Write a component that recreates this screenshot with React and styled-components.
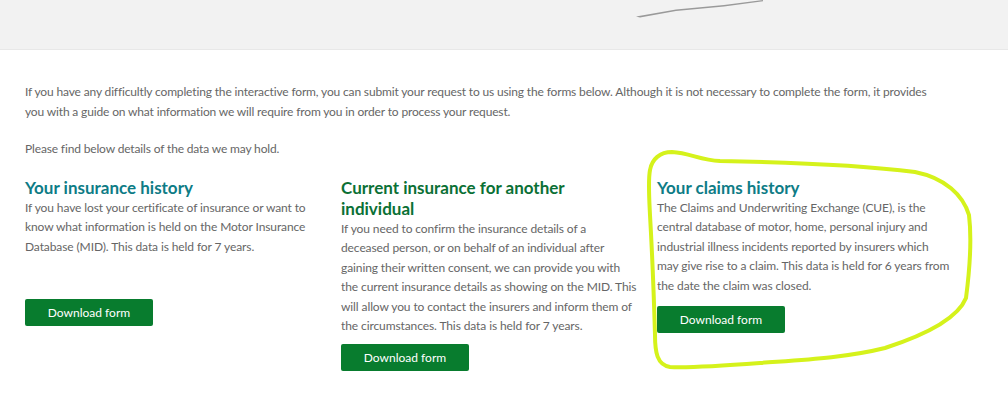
import styled, { createGlobalStyle } from 'styled-components';

const GlobalStyle = createGlobalStyle`
  body {
    margin: 0;
    background: #fff;
    font-family: Lato, "Open Sans", sans-serif;
  }
`;

const sections = [
  {
    title: 'Your insurance history',
    color: '#0e7c86',
    lines: [
      'If you have lost your certificate of insurance or want to',
      'know what information is held on the Motor Insurance',
      'Database (MID). This data is held for 7 years.',
    ],
    gap: 43,
  },
  {
    title: 'Current insurance for another individual',
    color: '#0b7035',
    lines: [
      'If you need to confirm the insurance details of a',
      'deceased person, or on behalf of an individual after',
      'gaining their written consent, we can provide you with',
      'the current insurance details as showing on the MID. This',
      'will allow you to contact the insurers and inform them of',
      'the circumstances. This data is held for 7 years.',
    ],
    gap: 8,
  },
  {
    title: 'Your claims history',
    color: '#0e7c86',
    lines: [
      'The Claims and Underwriting Exchange (CUE), is the',
      'central database of motor, home, personal injury and',
      'industrial illness incidents reported by insurers which',
      'may give rise to a claim. This data is held for 6 years from',
      'the date the claim was closed.',
    ],
    gap: 11,
  },
];

const intro = [
  'If you have any difficultly completing the interactive form, you can submit your request to us using the forms below. Although it is not necessary to complete the form, it provides',
  'you with a guide on what information we will require from you in order to process your request.',
];

export default function App() {
  return (
    <Page>
      <GlobalStyle />
      <Banner>
        <Swoosh width='160' height='24' viewBox='0 0 160 24'>
          <path d='M0 16.5 L40 9.5 L88 5 L127 0 L127 1.3 L88 6.5 L40 11 L4 17.5 Z' fill='#9a9a9a' />
        </Swoosh>
      </Banner>
      <Content>
        <Intro>
          {intro.map((l) => (
            <Line key={l}>{l}</Line>
          ))}
        </Intro>
        <Intro>Please find below details of the data we may hold.</Intro>
        <Columns>
          {sections.map((s) => (
            <Column key={s.title}>
              <Heading $color={s.color}>{s.title}</Heading>
              <Body>
                {s.lines.map((l) => (
                  <Line key={l}>{l}</Line>
                ))}
              </Body>
              <Button $gap={s.gap}>Download form</Button>
            </Column>
          ))}
        </Columns>
      </Content>
      <Scribble width='1008' height='393' viewBox='0 0 1008 393'>
        <path
          d='M650 170 C652 159 660 152 672 152 C690 153 700 160 720 161 C780 162 860 165 915 172 C945 178 963 195 969 215 C972 240 969 275 966 298 C958 318 925 335 885 348 C845 358 800 360 760 363 C720 366 690 368 670 367 C657 365 655 352 655 335 C654 300 652 250 650 215 C649 195 648 180 650 170'
          fill='none'
          stroke='#d5f21b'
          strokeWidth='4'
          strokeLinecap='round'
        />
      </Scribble>
    </Page>
  );
}

const Page = styled.div`
  position: relative;
  width: 1008px;
  height: 393px;
  overflow: hidden;
`;
const Banner = styled.div`
  position: relative;
  height: 49px;
  background: #f2f2f2;
  border-bottom: 1px solid #e8e8e8;
`;
const Swoosh = styled.svg`
  position: absolute;
  left: 636px;
  top: 0;
`;
const Content = styled.div`
  padding: 32px 25px 0;
`;
const Intro = styled.p`
  margin: 0 0 18px;
  font-size: 12px;
  letter-spacing: -0.15px;
  line-height: 19.5px;
  color: #666;
`;
const Line = styled.span`
  display: block;
  white-space: nowrap;
`;
const Columns = styled.div`
  display: grid;
  grid-template-columns: repeat(3, 298px);
  column-gap: 18px;
`;
const Column = styled.div`
  display: flex;
  flex-direction: column;
  align-items: flex-start;
`;
const Heading = styled.h2`
  margin: 0;
  font-size: 17px;
  line-height: 21px;
  font-weight: 700;
  color: ${(p) => p.$color};
`;
const Body = styled.p`
  margin: 0;
  font-size: 12px;
  letter-spacing: -0.1px;
  line-height: 19.5px;
  color: #666;
`;
const Button = styled.button`
  margin-top: ${(p) => p.$gap}px;
  width: 128px;
  height: 27px;
  border: 0;
  border-radius: 2px;
  background: #087c2e;
  color: #fff;
  font-family: Lato, sans-serif;
  font-size: 12px;
  cursor: pointer;
`;
const Scribble = styled.svg`
  position: absolute;
  left: 0;
  top: 0;
  pointer-events: none;
`;
